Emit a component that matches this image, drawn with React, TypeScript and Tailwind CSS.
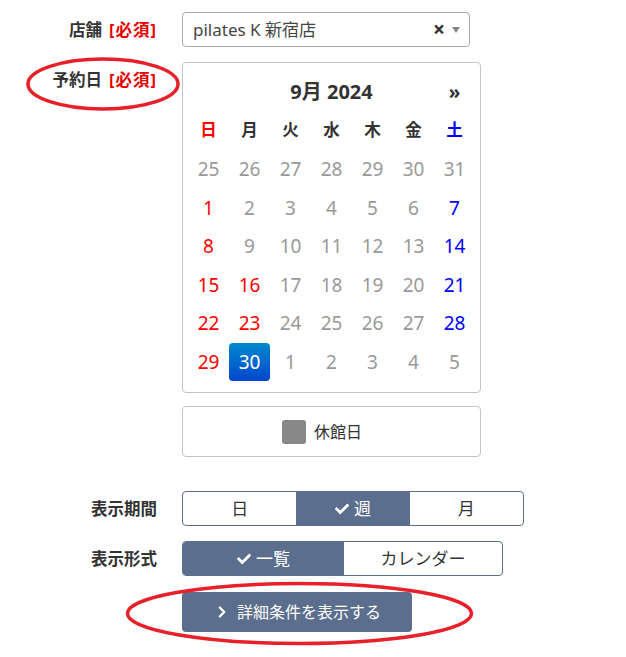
import { FaCheck } from "react-icons/fa";
import { ChevronRight } from "lucide-react";

type Day = { n: number; c: "gray" | "red" | "blue" | "active" };

const weekNames = ["日", "月", "火", "水", "木", "金", "土"];

// Sept 2024 — greyed days are outside month or not selectable
const weeks: Day[][] = [
  [25, 26, 27, 28, 29, 30, 31].map((n) => ({ n, c: "gray" as const })),
  [
    { n: 1, c: "red" },
    { n: 2, c: "gray" },
    { n: 3, c: "gray" },
    { n: 4, c: "gray" },
    { n: 5, c: "gray" },
    { n: 6, c: "gray" },
    { n: 7, c: "blue" },
  ],
  [
    { n: 8, c: "red" },
    { n: 9, c: "gray" },
    { n: 10, c: "gray" },
    { n: 11, c: "gray" },
    { n: 12, c: "gray" },
    { n: 13, c: "gray" },
    { n: 14, c: "blue" },
  ],
  [
    { n: 15, c: "red" },
    { n: 16, c: "red" },
    { n: 17, c: "gray" },
    { n: 18, c: "gray" },
    { n: 19, c: "gray" },
    { n: 20, c: "gray" },
    { n: 21, c: "blue" },
  ],
  [
    { n: 22, c: "red" },
    { n: 23, c: "red" },
    { n: 24, c: "gray" },
    { n: 25, c: "gray" },
    { n: 26, c: "gray" },
    { n: 27, c: "gray" },
    { n: 28, c: "blue" },
  ],
  [
    { n: 29, c: "red" },
    { n: 30, c: "active" },
    { n: 1, c: "gray" },
    { n: 2, c: "gray" },
    { n: 3, c: "gray" },
    { n: 4, c: "gray" },
    { n: 5, c: "gray" },
  ],
];

const dayColor = {
  gray: "text-[#999]",
  red: "text-[#ff0000]",
  blue: "text-[#0000ff]",
  active: "",
};

function Label({ text, required }: { text: string; required?: boolean }) {
  return (
    <div className="w-[157px] shrink-0 whitespace-nowrap text-right text-[16.5px] font-bold leading-[22px] text-[#333]">
      {text}
      {required && <span className="ml-[7px] tracking-[1px] text-[#e60000]">[必須]</span>}
    </div>
  );
}

function Calendar() {
  return (
    <div className="w-[299px] rounded-[4px] border border-[#c4c4c4] px-[5px] pt-[10px] pb-[11px]">
      <div className="grid h-[38.5px] grid-cols-7 items-center text-[#333]">
        <div />
        <div className="col-span-5 text-center text-[20px] font-bold">9月 2024</div>
        <div className="text-center text-[19px] font-bold">»</div>
      </div>
      <div className="grid h-[38.5px] grid-cols-7 items-center text-[16.5px] font-bold">
        {weekNames.map((w, i) => (
          <div
            key={w}
            className={`text-center ${i === 0 ? "text-[#ff0000]" : i === 6 ? "text-[#0000ff]" : "text-[#333]"}`}
          >
            {w}
          </div>
        ))}
      </div>
      {weeks.map((week, wi) => (
        <div key={wi} className="grid h-[38.5px] grid-cols-7 items-center text-[19px]">
          {week.map((d, di) =>
            d.c === "active" ? (
              <div
                key={di}
                className="flex h-[38px] items-center justify-center rounded-[4px] bg-gradient-to-b from-[#0088cc] to-[#0044cc] text-white"
              >
                {d.n}
              </div>
            ) : (
              <div key={di} className={`text-center ${dayColor[d.c]}`}>
                {d.n}
              </div>
            )
          )}
        </div>
      ))}
    </div>
  );
}

export default function App() {
  return (
    <div
      className="relative h-[657px] w-[626px] overflow-hidden bg-white text-[#333]"
      style={{ fontFamily: '"Noto Sans", "Noto Sans CJK JP", sans-serif' }}
    >
      <div className="flex flex-col pt-[12px]">
        {/* store */}
        <div className="flex h-[35px] items-center gap-[25px]">
          <Label text="店舗" required />
          <div className="flex h-[35px] w-[288px] items-center rounded-[4px] border border-[#aaa] pl-[10px] pr-[9px] text-[17px] text-[#444]">
            <span className="flex-1">pilates K 新宿店</span>
            <span className="mr-[7px] text-[21px] font-bold leading-none text-[#333]">×</span>
            <span className="h-0 w-0 border-x-[4px] border-t-[6px] border-x-transparent border-t-[#888]" />
          </div>
        </div>

        {/* date */}
        <div className="mt-[15px] flex gap-[25px]">
          <div className="pt-[7px]">
            <Label text="予約日" required />
          </div>
          <div className="flex flex-col">
            <Calendar />
            <div className="mt-[13px] flex h-[51px] w-[299px] items-center justify-center gap-[8px] rounded-[4px] border border-[#c4c4c4] pr-[19px]">
              <span className="h-[24px] w-[24px] rounded-[3px] bg-[#888]" />
              <span className="text-[16px] text-[#333]">休館日</span>
            </div>
          </div>
        </div>

        {/* period */}
        <div className="mt-[34px] flex h-[35px] items-center gap-[25px]">
          <Label text="表示期間" />
          <div className="flex h-[35px] w-[342px] overflow-hidden rounded-[4px] border border-[#5b6e8e] text-[17px]">
            <div className="flex flex-1 items-center justify-center text-[#333]">日</div>
            <div className="flex flex-1 items-center justify-center gap-[5px] bg-[#5b6e8e] text-white">
              <FaCheck className="h-[14px] w-[14px]" />週
            </div>
            <div className="flex flex-1 items-center justify-center text-[#333]">月</div>
          </div>
        </div>

        {/* format */}
        <div className="mt-[15px] flex h-[35px] items-center gap-[25px]">
          <Label text="表示形式" />
          <div className="flex h-[35px] w-[321px] overflow-hidden rounded-[4px] border border-[#5b6e8e] text-[17px]">
            <div className="flex w-[161px] items-center justify-center gap-[5px] bg-[#5b6e8e] text-white">
              <FaCheck className="h-[14px] w-[14px]" />一覧
            </div>
            <div className="flex flex-1 items-center justify-center text-[#333]">カレンダー</div>
          </div>
        </div>

        {/* detail button */}
        <div className="mt-[16px] pl-[182px]">
          <button className="flex h-[40px] w-[230px] items-center justify-center gap-[6px] rounded-[4px] bg-[#5b6e8e] text-[16px] text-white">
            <ChevronRight className="h-[18px] w-[18px]" strokeWidth={3} />
            詳細条件を表示する
          </button>
        </div>
      </div>

      {/* red annotation ellipses */}
      <svg className="pointer-events-none absolute inset-0" width="626" height="657">
        <ellipse cx="103" cy="84" rx="75" ry="25" fill="none" stroke="#e8202a" strokeWidth="3.5" />
        <ellipse cx="299.5" cy="613.5" rx="172" ry="30" fill="none" stroke="#e8202a" strokeWidth="3.5" />
      </svg>
    </div>
  );
}
